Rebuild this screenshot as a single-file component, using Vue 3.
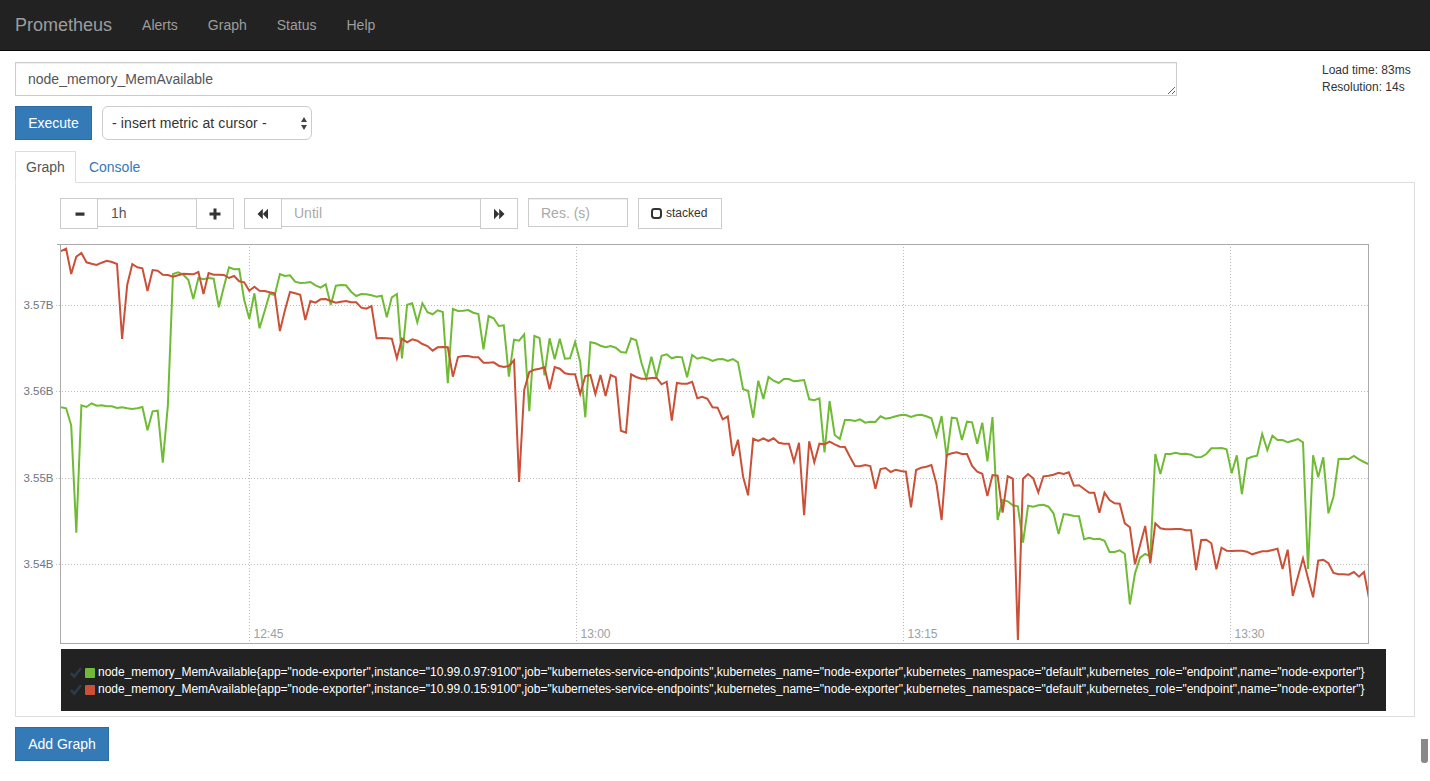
<script setup>
const seg = (base, arr) => arr.map((v) => base + v / 3)

const redY = [
  ...seg(240, [33,26,102,50,39,67,71,75,68,62,66,72,297,135,72,82,85,153,90,92,104,105,110,106,101,102,103,96,162,99,104,104,105,114,108,124,127,152,140,152,153,157,160,273,210,156,160,164,240,183,188,178,177,183,188,185,183,187,187,203,206,198]),
  ...seg(270, [205,204,205,206,265,206,217,208,212,222,228,242,232,231,232,320,261,258,258,262,262,278,278,277,287,291,288,271,636,360,306,299,296,292,358,291,296,310,313,313,372,318,315,372,315,378,315,322,482,488,313,321,326,326,324,323,343,335,452,339,341,341,335,385]),
  ...seg(340, [170,176,202,203,238,229,348,299,410,466,296,303,295,303,295,308,311,311,365,308,526,304,367,311,313,305,313,320,321,350,378,379,375,378,446,387,384,396,389,393,395,502,390,383,380,375,432,540,345,340,337,342,342,378,395,401,468,405,407,518,409,416,900,416,402]),
  ...seg(420, [175,217,169,167,164,158,162,157,197,196,207,218,218,278,218,240,250,251,310,322,433,375,318,430,310,325,328,328,327,327,331,331,450,360,359,370,448,383,392,393,392,392,395,403,398,394,394,390,386,447,389,528,470,415,475,532,422,419,430,459,463,463,464,456,470,456,537])
]

const greenY = [
  ...seg(240, [502,505,556,878,496,501,490,497,496,499,499,504,502,505,507,505,501,571,514,512,668,495,102,97,104,119,177,114,118,114,116,202,140,82,88,87,180,236,160,265,214,161,165,102,108,106,125,129,128,126,136,143,133,195,137,135,136,155,168,162,163,166]),
  ...seg(270, [80,77,142,82,72,265,104,100,157,100,127,133,121,126,340,117,123,122,120,128,132,238,138,145,168,166,320,209,212,193,424,198,204,316,205,268,206,266,265,216,276,442,217,220,227,232,228,233,246,248,205,211,277,325,260,322,257,253,265,260,262,322,255,266]),
  ...seg(340, [52,56,63,58,57,63,57,67,148,152,233,122,177,111,122,129,117,117,124,122,120,178,181,175,337,183,285,297,240,240,243,238,248,245,246,229,236,233,229,225,225,231,226,224,229,235,288,228,352,233,235,300,245,247,311,248,364,231,540,480,484,496,499,608,497]),
  ...seg(420, [260,256,254,260,280,342,282,284,288,289,358,353,358,356,362,396,396,391,401,553,460,413,402,409,102,162,102,102,98,102,101,104,112,111,102,85,85,84,88,160,106,222,116,110,107,42,90,47,60,60,67,62,57,67,447,106,172,112,280,230,117,116,117,108,118,126,133])
]

const toPoints = (ys) => ys.map((y, i) => `${(61 + 5.09 * i).toFixed(1)},${y.toFixed(1)}`).join(' ')
const redPoints = toPoints(redY)
const greenPoints = toPoints(greenY)

const navLinks = ['Alerts', 'Graph', 'Status', 'Help']
const yTicks = [
  { y: 305, label: '3.57B' },
  { y: 391, label: '3.56B' },
  { y: 478, label: '3.55B' },
  { y: 564, label: '3.54B' }
]
const xTicks = [
  { x: 249, label: '12:45' },
  { x: 576, label: '13:00' },
  { x: 903, label: '13:15' },
  { x: 1230, label: '13:30' }
]
const legend = [
  { color: '#70bb35', instance: '10.99.0.97:9100' },
  { color: '#ca5038', instance: '10.99.0.15:9100' }
]
const seriesName = (instance) =>
  `node_memory_MemAvailable{app="node-exporter",instance="${instance}",job="kubernetes-service-endpoints",kubernetes_name="node-exporter",kubernetes_namespace="default",kubernetes_role="endpoint",name="node-exporter"}`
</script>

<template>
  <div class="page">
    <nav class="navbar">
      <a class="brand">Prometheus</a>
      <a v-for="link in navLinks" :key="link" class="nav-link">{{ link }}</a>
    </nav>

    <main class="content">
      <div class="query-row">
        <textarea class="expr" spellcheck="false">node_memory_MemAvailable</textarea>
        <div class="stats">
          <div>Load time: 83ms</div>
          <div>Resolution: 14s</div>
        </div>
      </div>

      <div class="exec-row">
        <button class="btn-primary exec">Execute</button>
        <div class="select-wrap">
          <select class="metric-select">
            <option>- insert metric at cursor -</option>
          </select>
          <svg class="select-arrows" width="6" height="13" viewBox="0 0 6 13">
            <path d="M3 0 L6 5 H0 Z M3 13 L0 8 H6 Z" fill="#444" />
          </svg>
        </div>
      </div>

      <div class="tabs">
        <a class="tab active">Graph</a>
        <a class="tab">Console</a>
      </div>

      <section class="panel">
        <div class="controls">
          <div class="group">
            <button class="ctl-btn">
              <svg class="minus" width="10" height="12" viewBox="0 0 10 12"><rect x="0.5" y="4.5" width="9" height="3.2" fill="#333" /></svg>
            </button>
            <input class="ctl-input range" value="1h" />
            <button class="ctl-btn">
              <svg width="12" height="12" viewBox="0 0 12 12"><path d="M4.5 0.5 H7.5 V4.5 H11.5 V7.5 H7.5 V11.5 H4.5 V7.5 H0.5 V4.5 H4.5 Z" fill="#333" /></svg>
            </button>
          </div>
          <div class="group">
            <button class="ctl-btn">
              <svg width="12" height="12" viewBox="0 0 12 12"><path d="M0.5 6 L5.8 0.8 V11.2 Z M5.8 6 L11 0.8 V11.2 Z" fill="#333" /></svg>
            </button>
            <input class="ctl-input until" placeholder="Until" />
            <button class="ctl-btn">
              <svg width="12" height="12" viewBox="0 0 12 12"><path d="M1 0.8 L6.2 6 L1 11.2 Z M6.2 0.8 L11.5 6 L6.2 11.2 Z" fill="#333" /></svg>
            </button>
          </div>
          <input class="ctl-input res" placeholder="Res. (s)" />
          <button class="stacked">
            <svg width="11" height="11" viewBox="0 0 11 11"><rect x="1" y="1" width="9" height="9" rx="2.4" fill="none" stroke="#333" stroke-width="2" /></svg>
            <span class="stacked-label">stacked</span>
          </button>
        </div>

        <svg class="chart" width="1398" height="420" viewBox="16 229 1398 420">
          <defs>
            <clipPath id="plot-clip"><rect x="61" y="244" width="1307" height="399" /></clipPath>
          </defs>
          <g class="grid">
            <line v-for="t in yTicks" :key="t.y" x1="56" :y1="t.y + 0.5" x2="1368" :y2="t.y + 0.5" />
            <line v-for="t in xTicks" :key="t.x" :x1="t.x + 0.5" y1="244" :x2="t.x + 0.5" y2="643" />
          </g>
          <rect x="60.5" y="244.5" width="1308" height="399" fill="none" stroke="#aaa" />
          <line x1="57" y1="244.5" x2="61" y2="244.5" stroke="#aaa" />
          <text v-for="t in yTicks" :key="t.label" class="y-label" x="53.5" :y="t.y + 3.5" text-anchor="end">{{ t.label }}</text>
          <text v-for="t in xTicks" :key="t.label" class="x-label" :x="t.x + 4.5" y="638">{{ t.label }}</text>
          <g clip-path="url(#plot-clip)" fill="none" stroke-width="2" stroke-linejoin="miter">
            <polyline :points="greenPoints" stroke="#70bb35" />
            <polyline :points="redPoints" stroke="#ca5038" />
          </g>
        </svg>

        <div class="legend">
          <div v-for="row in legend" :key="row.instance" class="legend-row">
            <svg class="check" width="12" height="12" viewBox="0 0 12 12"><path d="M0 7 L2 5.2 L4.2 7.8 L10 0.6 L12 1.8 L4.4 11.6 Z" fill="#2b3c4e" /></svg>
            <span class="swatch" :style="{ background: row.color }"></span>
            <span class="legend-text">{{ seriesName(row.instance) }}</span>
          </div>
        </div>
      </section>

      <button class="btn-primary add">Add Graph</button>
    </main>

    <div class="thumb"></div>
  </div>
</template>

<style>
html, body { margin: 0; background: #fff; overflow: hidden; }
</style>

<style scoped>
.page {
  position: relative;
  height: 781px;
  overflow: hidden;
  font-family: "Liberation Sans", Arial, sans-serif;
  font-size: 14px;
  line-height: 20px;
  color: #333;
  background: #fff;
}
.navbar {
  display: flex;
  align-items: center;
  height: 50px;
  background: #222;
  border-bottom: 1px solid #080808;
}
.brand {
  padding: 0 15px;
  font-size: 18px;
  color: #9d9d9d;
}
.nav-link {
  padding: 0 15px;
  color: #9d9d9d;
}
.content { padding: 11px 15px 0; }
.query-row { display: flex; align-items: flex-start; }
.expr {
  box-sizing: border-box;
  width: 1162px;
  height: 34px;
  padding: 6px 12px;
  border: 1px solid #ccc;
  border-radius: 0;
  outline: none;
  color: #555;
  font: 14px/20px "Liberation Sans", Arial, sans-serif;
  box-shadow: inset 0 1px 1px rgba(0, 0, 0, .075);
}
.stats {
  margin-left: 145px;
  font-size: 12px;
  line-height: 17px;
}
.exec-row { display: flex; gap: 10px; margin-top: 10px; }
.btn-primary {
  box-sizing: border-box;
  height: 34px;
  padding: 0 12px;
  background: #337ab7;
  border: 1px solid #2e6da4;
  color: #fff;
  font: 14px/20px "Liberation Sans", Arial, sans-serif;
}
.exec { width: 77px; }
.select-wrap { position: relative; width: 210px; height: 34px; }
.metric-select {
  box-sizing: border-box;
  width: 100%;
  height: 100%;
  padding: 0 9px;
  appearance: none;
  background: #fff;
  border: 1px solid #ccc;
  border-radius: 6px;
  color: #333;
  font: 14px "Liberation Sans", Arial, sans-serif;
  letter-spacing: .11px;
}
.select-arrows { position: absolute; top: 11px; right: 5px; }
.tabs { display: flex; gap: 2px; margin-top: 11px; margin-bottom: -1px; }
.tab {
  position: relative;
  padding: 5px 10px;
  border: 1px solid transparent;
  border-bottom: 1px solid transparent;
  color: #337ab7;
}
.tab.active {
  color: #555;
  background: #fff;
  border-color: #ddd #ddd #fff;
}
.panel {
  box-sizing: border-box;
  width: 1400px;
  height: 535px;
  border: 1px solid #ddd;
  padding-top: 15px;
}
.controls {
  display: flex;
  align-items: flex-start;
  gap: 10px;
  margin-left: 44px;
  height: 31px;
}
.group { display: flex; align-items: flex-start; }
.ctl-btn {
  box-sizing: border-box;
  display: flex;
  align-items: center;
  justify-content: center;
  width: 38px;
  height: 31px;
  padding: 0;
  background: #fff;
  border: 1px solid #ccc;
}
.minus { margin-left: 2px; }
.ctl-input {
  box-sizing: border-box;
  height: 29px;
  padding: 0 12px;
  border: 1px solid #ccc;
  border-radius: 0;
  outline: none;
  color: #555;
  font: 14px "Liberation Sans", Arial, sans-serif;
  box-shadow: inset 0 1px 1px rgba(0, 0, 0, .075);
}
.ctl-input::placeholder { color: #aaa; opacity: 1; }
.range { width: 100px; margin: 0 -1px; padding-left: 13px; }
.until { margin: 0 -1px 0 0; border-left: 0; width: 199px; }
.res { width: 100px; }
.stacked {
  box-sizing: border-box;
  display: flex;
  align-items: center;
  gap: 4px;
  width: 84px;
  height: 31px;
  padding: 0 0 0 12px;
  background: #fff;
  border: 1px solid #ccc;
  color: #333;
  font: 12px "Liberation Sans", Arial, sans-serif;
}
.stacked-label { margin-top: -2px; }
.chart { display: block; }
.grid line {
  stroke: #bbb;
  stroke-width: 1;
  stroke-dasharray: 1 2;
}
.y-label {
  font-size: 11.5px;
  fill: #6f7480;
}
.x-label {
  font-size: 12px;
  fill: #9aa0a6;
}
.legend {
  box-sizing: border-box;
  width: 1325px;
  height: 62px;
  margin-left: 45px;
  padding: 15px 0 0 9px;
  background: #222;
  color: #fff;
  font-size: 12px;
  line-height: 17px;
}
.legend-row { display: flex; align-items: center; white-space: nowrap; }
.check { flex: none; }
.swatch {
  flex: none;
  width: 10px;
  height: 10px;
  margin: 0 3px;
  border-radius: 1px;
}
.add { display: block; width: 94px; margin-top: 10px; }
.thumb {
  position: absolute;
  left: 1421px;
  top: 739px;
  width: 7px;
  height: 24px;
  background: #888;
  border-radius: 0 0 3px 3px;
}
</style>
